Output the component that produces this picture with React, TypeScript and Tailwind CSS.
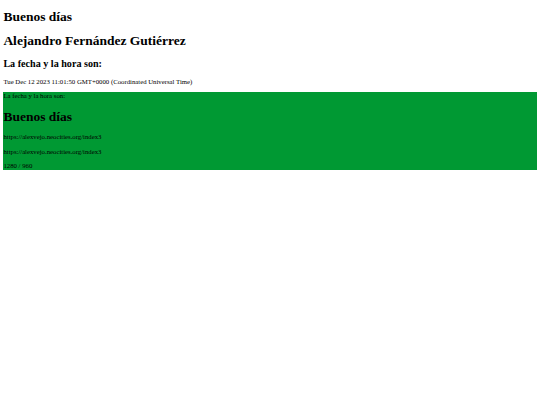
export default function App() {
  return (
    <div className="bg-white text-black font-['Liberation_Serif',serif] text-[6.75px] leading-[7.76px] pt-[8.8px] px-[3.375px]">
      <h1 className="text-[13.5px] leading-[15.5px] font-bold">Buenos días</h1>
      <h1 className="text-[13.5px] leading-[15.5px] font-bold mt-[8.64px]">Alejandro Fernández Gutiérrez</h1>
      <h2 className="text-[10.125px] leading-[11.6px] font-bold mt-[9.5px]">La fecha y la hora son:</h2>
      <p className="mt-[8.1px]">Tue Dec 12 2023 11:01:50 GMT+0000 (Coordinated Universal Time)</p>
      <div className="bg-[#009933] mt-[6.6px]">
        <p>La fecha y la hora son:</p>
        <h1 className="text-[13.5px] leading-[15.5px] font-bold mt-[9.04px]">Buenos días</h1>
        <p className="mt-[9.04px]">https://alexvejo.neocities.org/index3</p>
        <p className="mt-[6.75px]">https://alexvejo.neocities.org/index3</p>
        <p className="mt-[6.75px]">1280 / 960</p>
      </div>
    </div>
  );
}
